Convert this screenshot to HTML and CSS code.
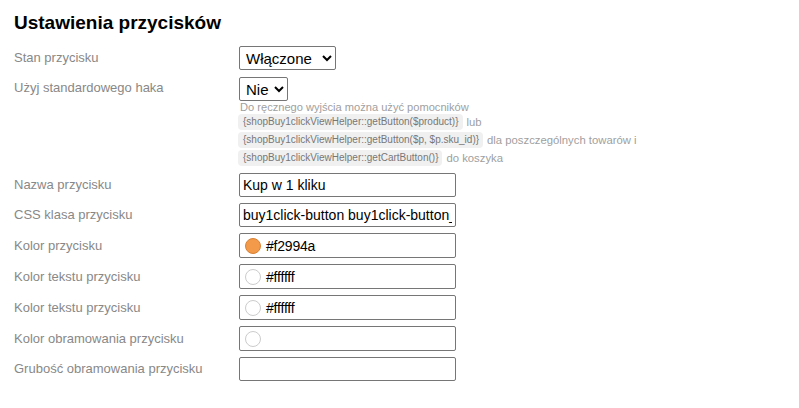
FILE: index.html
```html
<!DOCTYPE html>
<html lang="pl">
<head>
<meta charset="utf-8">
<title>Ustawienia przycisków</title>
<link rel="stylesheet" href="styles.css">
</head>
<body>
<div class="page">
  <h1 class="title">Ustawienia przycisków</h1>
  <div class="form">
    <div class="label">Stan przycisku</div>
    <div class="field">
      <select class="select select-wide"><option>Włączone</option><option>Wyłączone</option></select>
    </div>

    <div class="label">Użyj standardowego haka</div>
    <div class="field">
      <select class="select select-narrow"><option>Nie</option><option>Tak</option></select>
      <div class="help">
        <div class="help-line help-first">Do ręcznego wyjścia można użyć pomocników</div>
        <div class="help-line"><span class="chip">{shopBuy1clickViewHelper::getButton($product)}</span><span>lub</span></div>
        <div class="help-line"><span class="chip">{shopBuy1clickViewHelper::getButton($p, $p.sku_id)}</span><span>dla poszczególnych towarów i</span></div>
        <div class="help-line"><span class="chip">{shopBuy1clickViewHelper::getCartButton()}</span><span>do koszyka</span></div>
      </div>
    </div>

    <div class="label">Nazwa przycisku</div>
    <div class="field"><input class="input" type="text" value="Kup w 1 kliku"></div>

    <div class="label">CSS klasa przycisku</div>
    <div class="field"><input class="input" type="text" value="buy1click-button buy1click-button_primary"></div>

    <div class="label label-color">Kolor przycisku</div>
    <div class="field"><div class="color-input"><span class="swatch swatch-orange"></span><span class="color-value">#f2994a</span></div></div>

    <div class="label label-color">Kolor tekstu przycisku</div>
    <div class="field"><div class="color-input"><span class="swatch"></span><span class="color-value">#ffffff</span></div></div>

    <div class="label label-color">Kolor tekstu przycisku</div>
    <div class="field"><div class="color-input"><span class="swatch"></span><span class="color-value">#ffffff</span></div></div>

    <div class="label label-color">Kolor obramowania przycisku</div>
    <div class="field"><div class="color-input"><span class="swatch"></span><span class="color-value"></span></div></div>

    <div class="label">Grubość obramowania przycisku</div>
    <div class="field"><input class="input" type="text" value=""></div>
  </div>
</div>
</body>
</html>
```

FILE: styles.css
```css
* {
  box-sizing: border-box;
}

html, body {
  margin: 0;
  padding: 0;
  background: #ffffff;
}

body {
  font-family: "Liberation Sans", Arial, sans-serif;
  color: #000;
}

.page {
  padding: 12px 14px 0 14px;
}

.title {
  margin: 0 0 12px 0;
  font-size: 19px;
  line-height: 22px;
  font-weight: bold;
  color: #000;
}

.form {
  display: grid;
  grid-template-columns: 225px 1fr;
  row-gap: 6px;
  align-items: start;
}

.label {
  font-size: 13px;
  line-height: 24px;
  color: #888888;
}

.label-color {
  line-height: 25px;
}

.field {
  display: flex;
  flex-direction: column;
  align-items: flex-start;
}

.select {
  font-family: "Liberation Sans", Arial, sans-serif;
  font-size: 15px;
  height: 24px;
  color: #000;
  background: #fff;
  border: 1px solid #767676;
  border-radius: 2px;
  padding: 0 0 0 2px;
}

.select-wide {
  width: 97px;
}

.select-narrow {
  width: 49px;
  margin-top: 1px;
}

.help {
  margin-top: 0;
  margin-left: -1px;
  font-size: 11.3px;
  color: #a0a0a0;
}

.help-line {
  display: flex;
  align-items: center;
  gap: 4px;
  height: 18px;
  white-space: nowrap;
}

.help-first {
  height: 12px;
  font-size: 11.1px;
  padding-left: 2px;
}

.chip {
  display: block;
  background: #f0f0f0;
  color: #777777;
  font-size: 10px;
  line-height: 12px;
  padding: 2px 4px 2px 5px;
  border-radius: 4px;
}

.input {
  width: 217px;
  height: 24px;
  font-family: "Liberation Sans", Arial, sans-serif;
  font-size: 14px;
  color: #000;
  border: 1px solid #767676;
  border-radius: 2px;
  padding: 1px 3px;
  background: #fff;
}

.color-input {
  width: 217px;
  height: 25px;
  border: 1px solid #767676;
  border-radius: 2px;
  display: flex;
  align-items: center;
  padding-left: 5px;
  gap: 5px;
  font-size: 14px;
  color: #000;
}

.swatch {
  width: 16px;
  height: 16px;
  border-radius: 50%;
  border: 1px solid #cccccc;
  background: #ffffff;
  flex: none;
}

.swatch-orange {
  background: #f2994a;
  border-color: #d98236;
}

.color-value {
  letter-spacing: -0.2px;
}
```
